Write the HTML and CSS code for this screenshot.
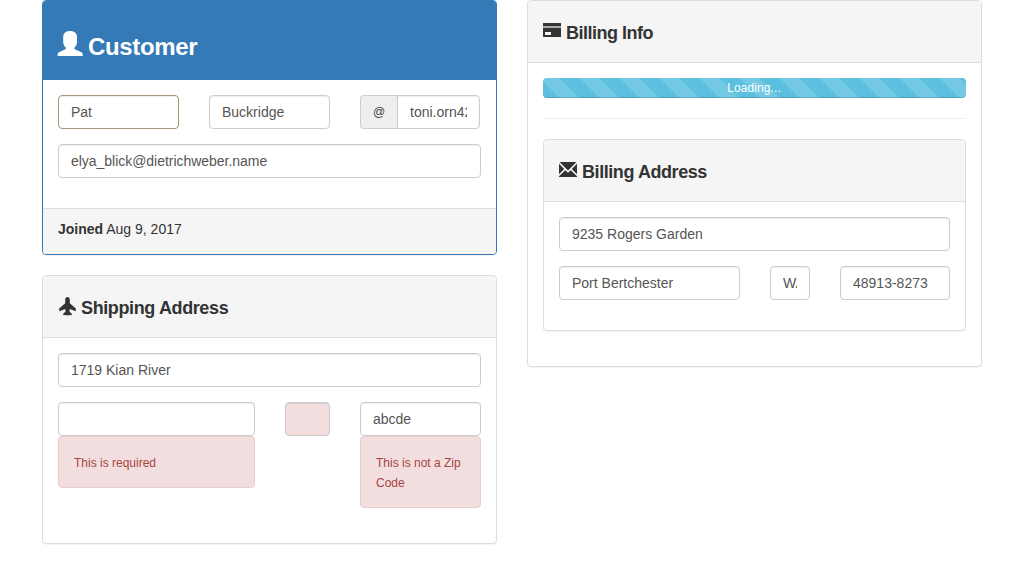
FILE: index.html
```html
<!DOCTYPE html>
<html lang="en">
<head>
<meta charset="utf-8">
<title>Customer</title>
<link rel="stylesheet" href="styles.css">
</head>
<body>
<main class="layout">
  <div class="column">
    <section class="panel panel-primary">
      <header class="panel-heading">
        <h2 class="title-large"><svg class="icon-user" viewBox="0 0 26 25"><path d="M13 0C8.500 0 6.200 2.500 6.200 6v5c0 2.500 1.100 4.300 2.600 5.400V18L2.500 21C1.200 21.700.7 22.300.7 23.500V25h25v-1.500c0-1.200-.5-1.800-1.800-2.500l-6.500-3v-1.600c1.500-1.100 2.600-2.900 2.600-5.400V6c0-3.500-2.500-6-7-6z"/></svg><span>Customer</span></h2>
      </header>
      <div class="panel-body">
        <div class="row row-name">
          <input class="field field-active" value="Pat" aria-label="First name">
          <input class="field" value="Buckridge" aria-label="Last name">
          <div class="input-group"><span class="addon">@</span><input class="field" value="toni.orn42" aria-label="Username"></div>
        </div>
        <div class="row"><input class="field email" value="elya_blick@dietrichweber.name" aria-label="Email"></div>
      </div>
      <footer class="panel-footer"><strong>Joined</strong> Aug 9, 2017</footer>
    </section>

    <section class="panel">
      <header class="panel-heading">
        <h3 class="title"><svg class="icon-plane" viewBox="0 0 18 19"><path d="M9.500 0c1.400 0 2.300 1.200 2.300 2.700v3.500l6 5.400v2.700l-6-2.300-.3 2.700 2.200 1.800v1.800l-2.800-.4-.9.500H9l-.9-.5-2.800.4v-1.800l2.200-1.800-.3-2.700-6 2.300v-2.700l6-5.400V2.700C7.200 1.200 8.100 0 9.500 0z"/></svg><span class="shipping-title">Shipping Address</span></h3>
      </header>
      <div class="panel-body">
        <div class="row"><input class="field" value="1719 Kian River" aria-label="Street"></div>
        <div class="row row-shipping">
          <div class="cell"><input class="field" value="" aria-label="City"><div class="alert">This is required</div></div>
          <div class="cell"><input class="field field-invalid" value="" aria-label="State"></div>
          <div class="cell"><input class="field" value="abcde" aria-label="Zip code"><div class="alert">This is not a Zip Code</div></div>
        </div>
      </div>
    </section>
  </div>

  <div class="column">
    <section class="panel">
      <header class="panel-heading">
        <h3 class="title"><svg class="icon-card" viewBox="0 0 18 14"><path fill-rule="evenodd" d="M0 0h18v3H0zM0 5h18v9H0zM2 9v3h6V9z"/><path class="card-band" d="M0 3h18v2H0z"/></svg><span class="info-title">Billing Info</span></h3>
      </header>
      <div class="panel-body">
        <div class="progress"><span class="progress-label">Loading...</span></div>
        <hr class="divider">
        <section class="panel">
          <header class="panel-heading">
            <h3 class="title"><svg class="icon-mail" viewBox="0 0 18 15"><path d="M.5 0h17L9 8.500zM0 1.800L5.200 7 0 12.200zM18 1.800v10.400L12.800 7zM6.300 8.200L9 10.800l2.700-2.600L18 14.300v.7H0v-.7z"/></svg><span class="billing-title">Billing Address</span></h3>
          </header>
          <div class="panel-body">
            <div class="row"><input class="field" value="9235 Rogers Garden" aria-label="Street"></div>
            <div class="row row-billing">
              <input class="field" value="Port Bertchester" aria-label="City">
              <input class="field" value="WA" aria-label="State">
              <input class="field" value="48913-8273" aria-label="Zip code">
            </div>
          </div>
        </section>
      </div>
    </section>
  </div>
</main>
</body>
</html>
```
FILE: styles.css
```css
* { box-sizing: border-box; }
body {
  margin: 0;
  font: 14px/20px "Liberation Sans", Arial, sans-serif;
  color: #333;
  background: #fff;
  overflow: hidden;
}
.layout {
  display: grid;
  grid-template-columns: 455px 455px;
  gap: 30px;
  padding-left: 42px;
  align-items: start;
}
.panel {
  margin-bottom: 20px;
  background: #fff;
  border: 1px solid #ddd;
  border-radius: 4px;
  box-shadow: 0 1px 1px rgba(0, 0, 0, .05);
}
.panel-heading {
  height: 62px;
  padding: 21px 15px 0;
  background: #f5f5f5;
  border-bottom: 1px solid #ddd;
  border-radius: 3px 3px 0 0;
}
.panel-body { padding: 15px; }
.panel-primary { border-color: #337ab7; }
.panel-primary > .panel-heading {
  height: 79px;
  padding-top: 30px;
  color: #fff;
  background: #337ab7;
  border-color: #337ab7;
}
.panel-footer {
  height: 46px;
  padding: 10px 15px;
  background: #f5f5f5;
  border-top: 1px solid #ddd;
  border-radius: 0 0 3px 3px;
}
.title, .title-large {
  display: flex;
  align-items: flex-start;
  margin: 0;
  font-size: 18px;
  line-height: 20px;
  font-weight: bold;
  white-space: nowrap;
}
.title span { padding-top: 1px; }
.title-large { font-size: 24px; line-height: 32px; letter-spacing: -.35px; }
.title svg, .title-large svg { flex: none; fill: currentColor; }
.icon-user { width: 26px; height: 25px; margin: 0 5px 0 -1px; }
.icon-plane { width: 18px; height: 19px; margin: 0 5px 0 0; }
.icon-card { width: 18px; height: 14px; margin: 1px 5px 0 0; }
.icon-mail { width: 18px; height: 15px; margin: 1px 5px 0 0; }
.card-band { fill: #aaa; }
.shipping-title { letter-spacing: -.38px; }
.info-title { letter-spacing: -.5px; }
.billing-title { letter-spacing: -.43px; }
.row { display: grid; gap: 30px; margin-bottom: 15px; align-items: start; }
.row-name { grid-template-columns: 121px 121px 120px; }
.row-shipping { grid-template-columns: 197px 45px 121px; margin-bottom: 20px; }
.row-billing { grid-template-columns: 181px 40px 110px; }
.field {
  display: block;
  width: 100%;
  min-width: 0;
  height: 34px;
  padding: 6px 12px;
  font: inherit;
  color: #555;
  background: #fff;
  border: 1px solid #ccc;
  border-radius: 4px;
  box-shadow: inset 0 1px 1px rgba(0, 0, 0, .075);
}
.email { letter-spacing: -.03px; }
.field-active { border-color: #a59878; }
.field-invalid { background: #f2dede; }
.input-group { display: flex; }
.input-group .field { flex: 1; border-radius: 0 4px 4px 0; }
.addon {
  width: 37px;
  height: 34px;
  font-size: 12px;
  line-height: 32px;
  text-align: center;
  color: #444;
  background: #eee;
  border: 1px solid #ccc;
  border-right: 0;
  border-radius: 4px 0 0 4px;
}
.alert {
  padding: 16px 15px 14px;
  font-size: 12px;
  color: #a94442;
  background: #f2dede;
  border: 1px solid #ebccd1;
  border-radius: 4px;
}
.progress {
  height: 20px;
  font-size: 12px;
  text-align: center;
  color: #fff;
  background: #5bc0de linear-gradient(45deg, rgba(255,255,255,.15) 25%, transparent 25%, transparent 50%, rgba(255,255,255,.15) 50%, rgba(255,255,255,.15) 75%, transparent 75%) -3px 0 / 40px 40px;
  border-radius: 4px;
  box-shadow: inset 0 -1px 0 rgba(0, 0, 0, .15);
}
.progress-label { padding-right: 1px; letter-spacing: .1px; }
.divider { margin: 20px 0; border: 0; border-top: 1px solid #eee; }
```
